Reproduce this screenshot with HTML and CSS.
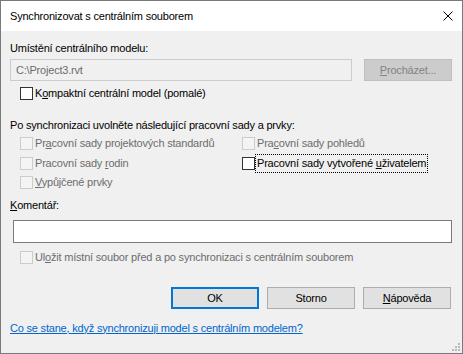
FILE: index.html
```html
<!DOCTYPE html>
<html lang="cs">
<head>
  <meta charset="UTF-8" />
  <meta name="viewport" content="width=device-width, initial-scale=1.0"/>
  <title>Synchronizovat s centrálním souborem</title>
  <link rel="stylesheet" href="styles.css">
</head>
<body>
  <div class="window">
    <div class="titlebar">
      <span class="title">Synchronizovat s centrálním souborem</span>
      <svg class="close" width="10" height="10" viewBox="0 0 10 10">
        <path d="M0.5 0.5 L9.5 9.5 M9.5 0.5 L0.5 9.5" stroke="#000" stroke-width="1" fill="none"/>
      </svg>
    </div>

    <div class="content">
      <div class="label first">Umístění centrálního modelu:</div>
      <div class="path-row">
        <div class="path-input">C:\Project3.rvt</div>
        <div class="btn disabled"><u>P</u>rocházet...</div>
      </div>

      <div class="check compact"><span class="box"></span><span>K<u>o</u>mpaktní centrální model (pomalé)</span></div>

      <div class="label heading">Po synchronizaci uvolněte následující pracovní sady a prvky:</div>
      <div class="check-grid">
        <div class="check off"><span class="box"></span><span>Pr<u>a</u>covní sady projektových standardů</span></div>
        <div class="check off"><span class="box"></span><span>Pra<u>c</u>ovní sady pohledů</span></div>
        <div class="check off"><span class="box"></span><span>Pracovní sady <u>r</u>odin</span></div>
        <div class="check"><span class="box"></span><span class="focus">Pracovní sady vytvořené <u>u</u>živatelem</span></div>
        <div class="check off"><span class="box"></span><span><u>V</u>ypůjčené prvky</span></div>
      </div>

      <div class="label comment-label"><u>K</u>omentář:</div>
      <div class="comment"></div>

      <div class="check off save"><span class="box"></span><span>Ul<u>o</u>žit místní soubor před a po synchronizaci s centrálním souborem</span></div>

      <div class="buttons">
        <div class="btn default">OK</div>
        <div class="btn">Storno</div>
        <div class="btn"><u>N</u>ápověda</div>
      </div>

      <a class="help" href="#">Co se stane, když synchronizuji model s centrálním modelem?</a>
    </div>

    <svg class="grip" width="8" height="8" viewBox="0 0 8 8">
      <rect x="6" y="0" width="2" height="2" fill="#b8b8b8"/>
      <rect x="3" y="3" width="2" height="2" fill="#b8b8b8"/>
      <rect x="6" y="3" width="2" height="2" fill="#b8b8b8"/>
      <rect x="0" y="6" width="2" height="2" fill="#b8b8b8"/>
      <rect x="3" y="6" width="2" height="2" fill="#b8b8b8"/>
      <rect x="6" y="6" width="2" height="2" fill="#b8b8b8"/>
    </svg>
  </div>
</body>
</html>
```

FILE: styles.css
```css
body {
  margin: 0;
  font-family: "Liberation Sans", Arial, sans-serif;
  font-size: 11px;
  letter-spacing: -0.2px;
  color: #000;
}
.window {
  position: relative;
  width: 463px;
  height: 354px;
  box-sizing: border-box;
  border: 1px solid #7a7a7a;
  background: #f0f0f0;
}
.titlebar {
  height: 30px;
  background: #fff;
  display: flex;
  align-items: center;
  justify-content: space-between;
  padding: 0 9px 0 9px;
}
.title {
  font-size: 11px;
}
.content {
  padding: 0 10px 0 9px;
}
.label {
  line-height: 15px;
}
.first {
  margin-top: 10px;
}
.path-row {
  display: flex;
  justify-content: space-between;
  margin-top: 3px;
}
.path-input {
  width: 342px;
  height: 22px;
  box-sizing: border-box;
  border: 1px solid #cccccc;
  color: #6d6d6d;
  padding: 3px 5px;
  line-height: 14px;
}
.btn {
  width: 88px;
  height: 22px;
  box-sizing: border-box;
  border: 1px solid #adadad;
  background: #e1e1e1;
  text-align: center;
  line-height: 20px;
}
.btn.disabled {
  background: #cccccc;
  border-color: #bfbfbf;
  color: #838383;
}
.btn.default {
  border: 2px solid #0078d7;
  line-height: 18px;
}
.check {
  display: flex;
  align-items: center;
  gap: 2px;
  line-height: 15px;
}
.box {
  width: 13px;
  height: 13px;
  box-sizing: border-box;
  border: 1px solid #333;
  background: #fff;
}
.check.off {
  color: #6d6d6d;
}
.check.off .box {
  border-color: #cccccc;
  background: #f4f4f4;
}
.compact {
  margin: 5px 0 0 10px;
}
.heading {
  margin-top: 17px;
}
.check-grid {
  display: grid;
  grid-template-columns: 222px 1fr;
  grid-auto-rows: 19.5px;
  margin: 1px 0 0 10px;
}
.focus {
  outline: 1px dotted #000;
  outline-offset: 1px;
}
.comment-label {
  margin-top: 5px;
}
.comment {
  height: 23px;
  box-sizing: border-box;
  border: 1px solid #7a7a7a;
  background: #fff;
  margin: 7px 0 0 3px;
}
.save {
  margin: 7px 0 0 10px;
}
.buttons {
  display: flex;
  justify-content: flex-end;
  gap: 8px;
  margin: 22px 1px 0 0;
}
.help {
  display: inline-block;
  margin-top: 12px;
  color: #0066cc;
  line-height: 15px;
}
.grip {
  position: absolute;
  right: 2px;
  bottom: 2px;
}
```
